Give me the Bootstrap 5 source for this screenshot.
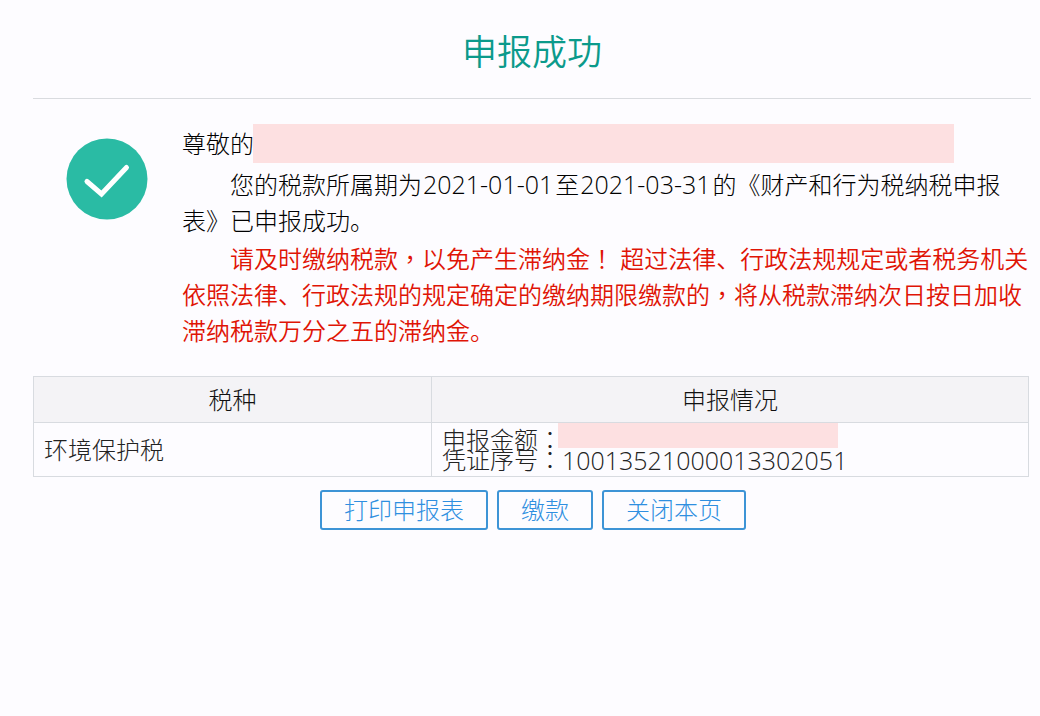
<!DOCTYPE html>
<html lang="zh-CN">
<head>
<meta charset="utf-8">
<meta name="viewport" content="width=device-width, initial-scale=1">
<title>申报成功</title>
<link href="https://cdn.jsdelivr.net/npm/bootstrap@5.3.0/dist/css/bootstrap.min.css" rel="stylesheet">
<style>
body{background:#fdfcff;color:#000;font-family:"Open Sans","Noto Sans CJK SC",sans-serif;font-weight:300;font-size:24px;line-height:36px}
.page{padding:24px 9px 24px 33px}
.page-title{font-size:35px;line-height:56px;font-weight:350;color:#0b9a8b;padding-bottom:18px;border-bottom:1px solid #d9dbdf;margin:0}
.notice{padding:25px 0 27px 33px;gap:34px}
.notice-icon{width:82px;height:82px;margin-top:14px}
.notice-text{gap:2px}
.notice-text p{text-indent:48px;margin:0}
.greeting{height:39px;margin-bottom:2px}
.greeting span{width:71px;white-space:nowrap}
.redacted{background:#fde0e1}
.redacted-name{width:701px;height:39px}
.redacted-sum{width:280px;height:25px}
.warn{color:#e01405;font-weight:350}
.mid{font-family:"Open Sans","Noto Sans CJK TC",sans-serif;line-height:20px}
.num{font-size:25px;line-height:20px}
.notice-text .num{margin:0 2px 0 1px}
.result{margin:0 0 13px;width:calc(100% - 2px);--bs-table-bg:transparent;border-color:#d8dbe0;color:#111}
.result th{background:#f4f3f6;font-weight:300;padding:5px 8px 4px;width:40%}
.result th+th{width:60%}
.result td{padding:0 10px;height:54px;color:#222}
.result dl{line-height:20px;margin:0}
.result dt,.result dd{font-weight:300;margin:0}
.sum-row{height:27px}
.result .redacted-sum{margin-left:-4px}
.actions{gap:9px;padding-left:2px}
.act{--bs-btn-color:#2f8fe0;--bs-btn-border-color:#3d94d6;--bs-btn-hover-bg:#3d94d6;--bs-btn-hover-color:#fff;--bs-btn-border-radius:3px;--bs-btn-border-width:2px;--bs-btn-font-weight:300;font-size:24px;line-height:36px;padding:0 22px}
</style>
</head>
<body>
<main class="page">
  <h1 class="page-title text-center">申报成功</h1>
  <section class="notice d-flex align-items-start">
    <svg class="notice-icon flex-shrink-0" viewBox="0 0 82 82" aria-hidden="true"><circle cx="41" cy="41" r="40.5" fill="#2abba4"/><path d="M21 43.5 35.5 56 60.5 29.5" fill="none" stroke="#fff" stroke-width="5" stroke-linecap="round"/></svg>
    <div class="notice-text d-flex flex-column flex-grow-1">
      <div class="greeting d-flex align-items-center"><span>尊敬的</span><div class="redacted redacted-name"></div></div>
      <p>您的税款所属期为<span class="num">2021-01-01</span>至<span class="num">2021-03-31</span>的《财产和行为税纳税申报表》已申报成功。</p>
      <p class="warn">请及时缴纳税款<span class="mid" lang="zh-TW">，</span>以免产生滞纳金<span class="mid" lang="zh-TW">！</span> 超过法律、行政法规规定或者税务机关依照法律、行政法规的规定确定的缴纳期限缴款的<span class="mid" lang="zh-TW">，</span>将从税款滞纳次日按日加收滞纳税款万分之五的滞纳金。</p>
    </div>
  </section>
  <table class="table table-bordered result">
    <thead><tr><th class="text-center" scope="col">税种</th><th class="text-center" scope="col">申报情况</th></tr></thead>
    <tbody><tr><td class="align-middle">环境保护税</td><td class="align-top">
      <dl>
        <div class="sum-row d-flex align-items-start"><dt class="align-self-end">申报金额<span class="mid" lang="zh-TW">：</span></dt><dd class="redacted redacted-sum"></dd></div>
        <div class="d-flex"><dt>凭证序号<span class="mid" lang="zh-TW">：</span></dt><dd class="num">10013521000013302051</dd></div>
      </dl></td></tr></tbody>
  </table>
  <div class="actions d-flex justify-content-center">
    <button type="button" class="btn act">打印申报表</button>
    <button type="button" class="btn act">缴款</button>
    <button type="button" class="btn act">关闭本页</button>
  </div>
</main>
<script src="https://cdn.jsdelivr.net/npm/bootstrap@5.3.0/dist/js/bootstrap.bundle.min.js"></script>
</body>
</html>
